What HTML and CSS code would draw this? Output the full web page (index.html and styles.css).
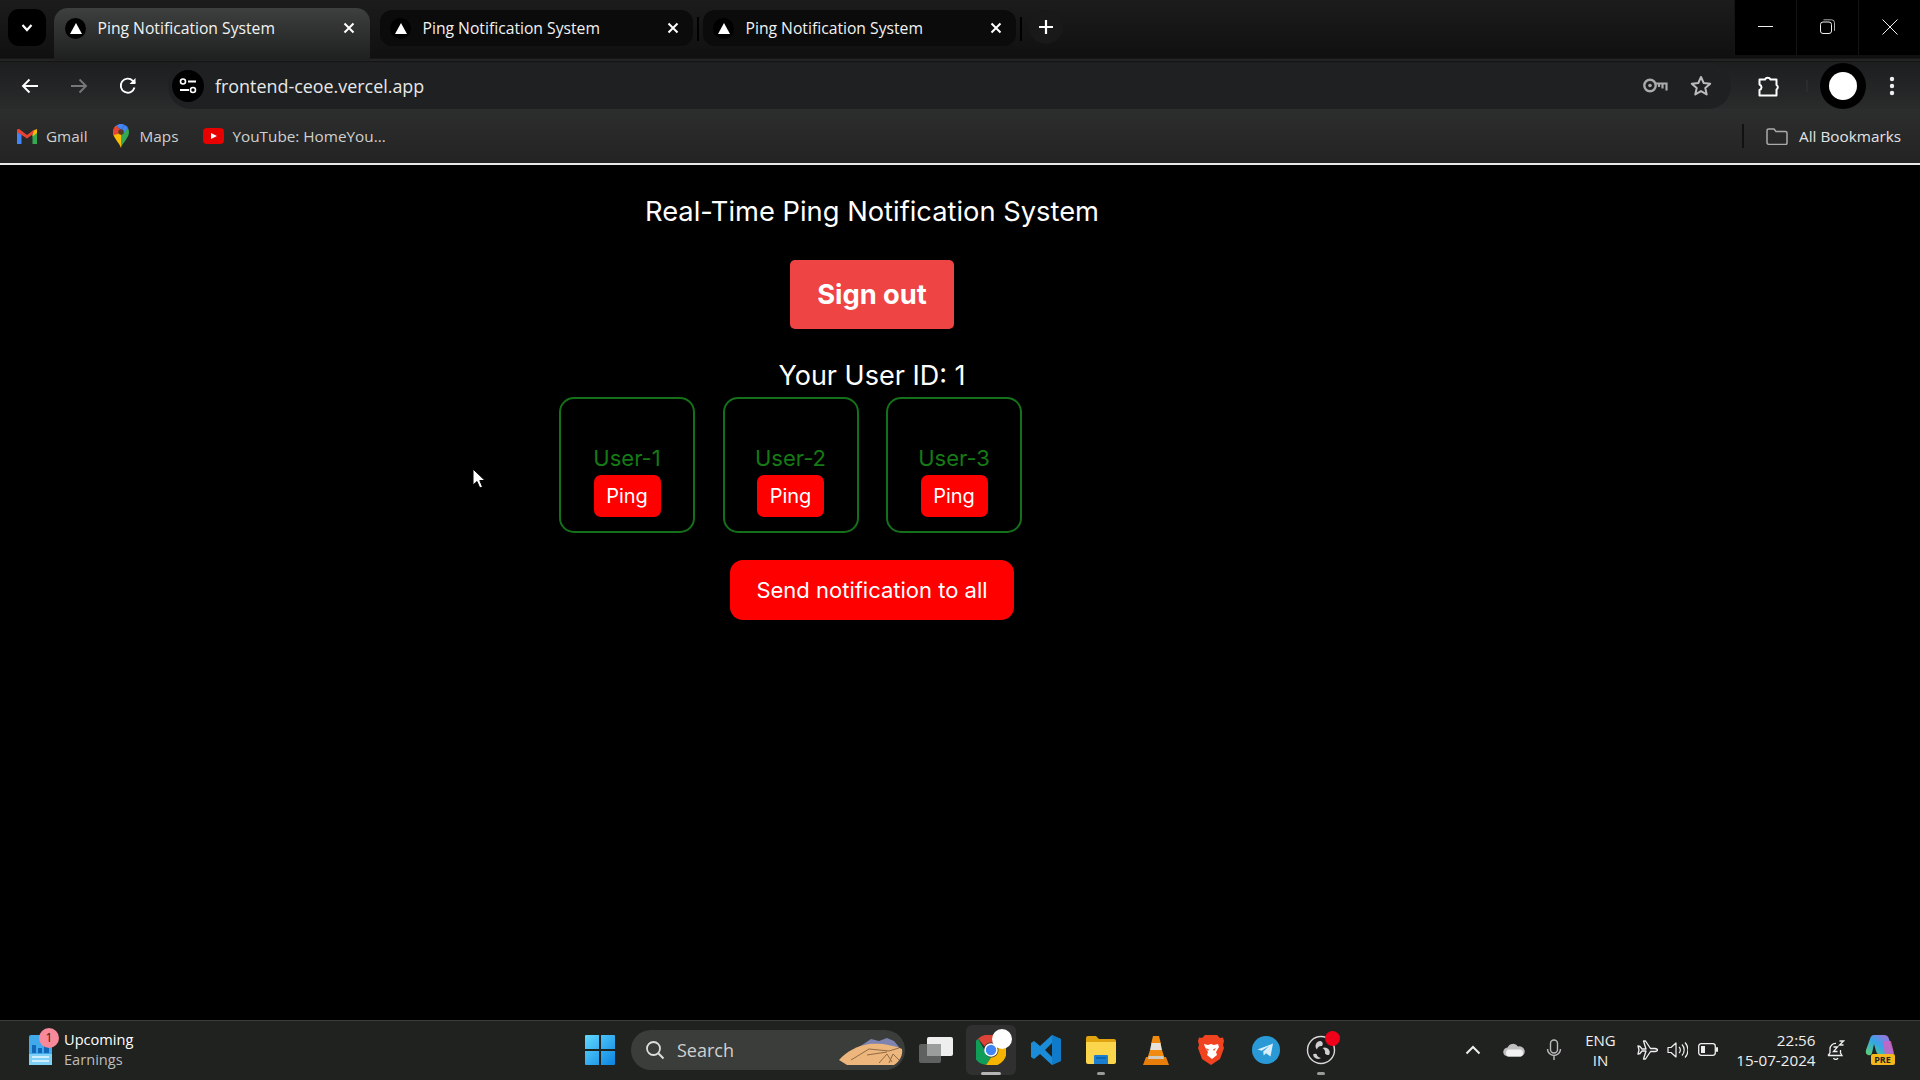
FILE: index.html
```html
<!DOCTYPE html>
<html lang="en">
<head>
  <meta charset="UTF-8" />
  <title>Ping Notification System</title>
  <link rel="stylesheet" href="styles.css">
</head>
<body>
  <header class="browser">
    <div class="tabstrip">
      <button class="tab-search">
        <svg width="14" height="10" viewBox="0 0 14 10"><path d="M2.500 2 7 7l4.500-5" fill="none" stroke="#fff" stroke-width="2.200"/></svg>
      </button>
      <div class="tab tab-active">
        <span class="favicon"><svg width="12" height="11" viewBox="0 0 12 11"><path d="M6 0l6 11H0z" fill="#fff"/></svg></span>
        <span class="tab-title">Ping Notification System</span>
        <svg class="tab-close" width="12" height="12" viewBox="0 0 12 12"><path d="M1.500 1.500l9 9m0-9l-9 9" stroke="#fff" stroke-width="2"/></svg>
      </div>
      <div class="tab">
        <span class="favicon"><svg width="12" height="11" viewBox="0 0 12 11"><path d="M6 0l6 11H0z" fill="#fff"/></svg></span>
        <span class="tab-title">Ping Notification System</span>
        <svg class="tab-close" width="12" height="12" viewBox="0 0 12 12"><path d="M1.500 1.500l9 9m0-9l-9 9" stroke="#fff" stroke-width="2"/></svg>
      </div>
      <span class="tab-sep"></span>
      <div class="tab">
        <span class="favicon"><svg width="12" height="11" viewBox="0 0 12 11"><path d="M6 0l6 11H0z" fill="#fff"/></svg></span>
        <span class="tab-title">Ping Notification System</span>
        <svg class="tab-close" width="12" height="12" viewBox="0 0 12 12"><path d="M1.500 1.500l9 9m0-9l-9 9" stroke="#fff" stroke-width="2"/></svg>
      </div>
      <span class="tab-sep"></span>
      <button class="tab-new">
        <svg width="16" height="16" viewBox="0 0 16 16"><path d="M8 1v14M1 8h14" stroke="#fff" stroke-width="2.200"/></svg>
      </button>
      <div class="window-controls">
        <span class="win-btn"><svg width="15" height="3" viewBox="0 0 15 3"><path d="M0 1.500h15" stroke="#eee" stroke-width="1"/></svg></span>
        <span class="win-btn"><svg width="15" height="15" viewBox="0 0 15 15"><rect x=".5" y="3" width="11" height="11.500" rx="2.500" fill="none" stroke="#eee"/><path d="M3.500.8h8a3 3 0 0 1 3 3v8" fill="none" stroke="#aaa"/></svg></span>
        <span class="win-btn"><svg width="16" height="16" viewBox="0 0 16 16"><path d="M.5.500l15 15m0-15l-15 15" stroke="#eee" stroke-width="1"/></svg></span>
      </div>
    </div>

    <div class="toolbar">
      <svg class="nav-icon" width="18" height="16" viewBox="0 0 18 16"><path d="M17 8H2M8.500 1.500 2 8l6.500 6.500" fill="none" stroke="#fff" stroke-width="1.900"/></svg>
      <svg class="nav-icon" width="18" height="16" viewBox="0 0 18 16"><path d="M1 8h15M9.500 1.500 16 8l-6.500 6.500" fill="none" stroke="#777" stroke-width="1.900"/></svg>
      <svg class="nav-icon" width="18" height="18" viewBox="0 0 18 18"><path d="M15.500 10.500A7 7 0 1 1 13.800 3.800L16 6" fill="none" stroke="#fff" stroke-width="1.900"/><path d="M16.500 1v6h-6z" fill="#fff"/></svg>
      <div class="omnibox">
        <span class="site-info">
          <svg width="18" height="16" viewBox="0 0 18 16"><circle cx="4" cy="3.500" r="2.500" fill="none" stroke="#fff" stroke-width="1.600"/><path d="M9 3.500h8M1 12h9" stroke="#fff" stroke-width="1.800"/><circle cx="14" cy="12" r="2.500" fill="none" stroke="#fff" stroke-width="1.600"/></svg>
        </span>
        <span class="url">frontend-ceoe.vercel.app</span>
        <svg class="omni-key" width="25" height="15" viewBox="0 0 25 15"><circle cx="7" cy="7.500" r="5.700" fill="none" stroke="#aaa" stroke-width="2.400"/><circle cx="7" cy="7.500" r="1.800" fill="#aaa"/><path d="M13 5.500h10.500v7M19.500 5.500v5M16 5.500v3.500" fill="none" stroke="#aaa" stroke-width="2.200"/></svg>
        <svg class="omni-star" width="22" height="21" viewBox="0 0 22 21"><path d="M11 2l2.700 6 6.500.7-4.900 4.300 1.400 6.400L11 16.100l-5.700 3.300 1.400-6.400L1.800 8.700 8.300 8z" fill="none" stroke="#bbb" stroke-width="2" stroke-linejoin="round"/></svg>
      </div>
      <svg class="ext-icon" width="24" height="24" viewBox="0 0 24 24"><path d="M2.500 5.500h5.500a3 3 0 0 1 5.500 0h6v5.500a2.600 2.600 0 0 1 0 4.500v6H2.500v-5.500a3.200 3.200 0 0 0 2-2.700 3.200 3.200 0 0 0-2-2.800z" fill="none" stroke="#fff" stroke-width="2" stroke-linejoin="round"/></svg>
      <span class="toolbar-sep"></span>
      <span class="avatar"><span class="avatar-dot"></span></span>
      <svg class="menu-dots" width="6" height="20" viewBox="0 0 6 20"><circle cx="3" cy="3" r="2.200" fill="#eee"/><circle cx="3" cy="10" r="2.200" fill="#eee"/><circle cx="3" cy="17" r="2.200" fill="#eee"/></svg>
    </div>

    <div class="bookmarks">
      <a class="bookmark bm-gmail">
        <svg width="20" height="15" viewBox="0 0 20 15"><path d="M0 2.500V15h4.500V5.500z" fill="#4285f4"/><path d="M20 2.500V15h-4.500V5.500z" fill="#34a853"/><path d="M15.500 2 20 0v4l-4.500 3.500z" fill="#fbbc04"/><path d="M0 1.500C0 0 1.500-.5 2.500.3L10 6 17.500.3 15.500 5.500 10 9.500 0 3z" fill="#ea4335"/></svg>
        <span>Gmail</span>
      </a>
      <a class="bookmark bm-maps">
        <svg width="16" height="24" viewBox="0 0 16 24"><path d="M8 24C6 18 0 14 0 8a8 8 0 0 1 3-6.200L8 8z" fill="#fbbc04"/><path d="M8 24c2-6 8-10 8-16 0-1.500-.4-2.800-1-4L8 11z" fill="#34a853"/><path d="M3 1.800A8 8 0 0 1 12 1L8 6z" fill="#4285f4"/><path d="M12 1a8 8 0 0 1 3 3L11 9 8 6z" fill="#4285f4"/><path d="M3 1.800 8 6 5 10 .6 11A8 8 0 0 1 3 1.800z" fill="#ea4335"/><circle cx="8" cy="8" r="2.800" fill="#5a3b20"/></svg>
        <span>Maps</span>
      </a>
      <a class="bookmark bm-yt">
        <svg width="21" height="16" viewBox="0 0 21 16"><rect width="21" height="16" rx="4" fill="#e80000"/><path d="M8 5l6 3-6 3z" fill="#fff"/></svg>
        <span>YouTube: HomeYou...</span>
      </a>
      <span class="bookmarks-sep"></span>
      <a class="bookmark bm-all">
        <svg width="22" height="17" viewBox="0 0 22 17"><path d="M1 15V2.500C1 1.500 1.500 1 2.500 1H8l2 2.500h9.500c1 0 1.500.5 1.500 1.500v10c0 1-.5 1.500-1.500 1.500h-17C1.500 16 1 15.500 1 15z" fill="none" stroke="#aaa" stroke-width="1.500"/></svg>
        <span>All Bookmarks</span>
      </a>
    </div>
  </header>

  <main class="page">
    <h1 class="title">Real-Time Ping Notification System</h1>
    <button class="btn-signout">Sign out</button>
    <p class="user-id">Your User ID: 1</p>
    <div class="users">
      <div class="user-card">
        <span class="user-name">User-1</span>
        <button class="btn-ping">Ping</button>
      </div>
      <div class="user-card">
        <span class="user-name">User-2</span>
        <button class="btn-ping">Ping</button>
      </div>
      <div class="user-card">
        <span class="user-name">User-3</span>
        <button class="btn-ping">Ping</button>
      </div>
    </div>
    <button class="btn-all">Send notification to all</button>
    <svg class="cursor" width="14" height="22" viewBox="0 0 14 22"><path d="M1 1v16l4-3.500 2.800 6.500 2.700-1.200L7.800 12.500H13z" fill="#fff" stroke="#000"/></svg>
  </main>

  <footer class="taskbar">
    <div class="widget">
      <span class="widget-icon">
        <svg width="23" height="30" viewBox="0 0 23 30"><rect width="23" height="30" rx="2" fill="#3fa9ec"/><path d="M3 18h4v-8H3zM9 18h4v-5H9zM15 18h5v-7h-5z" fill="#1166b8"/><path d="M0 19h23v11H0z" fill="#7fd0f7"/><path d="M3 22h17M3 26h17" stroke="#e6f7ff" stroke-width="1.600"/></svg>
        <span class="widget-badge">1</span>
      </span>
      <span class="widget-text">
        <span class="widget-title">Upcoming</span>
        <span class="widget-sub">Earnings</span>
      </span>
    </div>

    <div class="task-apps">
      <svg class="start" width="30" height="30" viewBox="0 0 30 30"><defs><linearGradient id="win" x1="0" y1="0" x2="1" y2="1"><stop offset="0" stop-color="#62d8ff"/><stop offset="1" stop-color="#0a84e0"/></linearGradient></defs><path d="M0 1q0-1 1-1h13v14H0zM16 0h13q1 0 1 1v13H16zM0 16h14v14H1q-1 0-1-1zM16 16h14v13q0 1-1 1H16z" fill="url(#win)"/></svg>
      <div class="searchbox">
        <svg width="20" height="20" viewBox="0 0 20 20"><circle cx="8.500" cy="8.500" r="6.500" fill="none" stroke="#ddd" stroke-width="1.800"/><path d="M13.300 13.300 18.500 18.500" stroke="#ddd" stroke-width="2"/></svg>
        <span>Search</span>
        <svg class="search-art" width="64" height="30" viewBox="0 0 64 30"><path d="M20 12 32 4l8 2 8-3 7 3 5 6v6H20z" fill="#7f83b0"/><path d="M0 25C8 16 18 11 30 9c12-1 24 1 33 5 1 6-2 12-8 16H8z" fill="#ecb67c"/><path d="M12 25l18-11 20 2 10-3M28 20l20-3M40 28l8-9 5 8M50 28l4-9 6 6" fill="none" stroke="#8f6a45" stroke-width="1"/></svg>
      </div>
      <span class="app app-taskview">
        <svg width="34" height="26" viewBox="0 0 34 26"><rect x="0" y="7" width="22" height="19" rx="2" fill="#5f6160"/><rect x="8" y="0" width="26" height="19" rx="2" fill="#eee"/><rect x="8" y="7" width="14" height="12" fill="#9b9d9c"/></svg>
      </span>
      <span class="app app-chrome">
        <svg width="30" height="30" viewBox="0 0 30 30"><path d="M15 0a15 15 0 0 1 13 7.500H15a7.500 7.500 0 0 0-6.500 3.800L2 3.800A15 15 0 0 1 15 0z" fill="#db4437"/><path d="M2 3.800l6.500 11.200a7.500 7.500 0 0 0 6.500 7.500L10 30A15 15 0 0 1 2 3.800z" fill="#0f9d58"/><path d="M28 7.500A15 15 0 0 1 10 30l5-7.500a7.500 7.500 0 0 0 6.500-11.200z" fill="#f4b400"/><circle cx="15" cy="15" r="6" fill="#4285f4" stroke="#fff" stroke-width="1.600"/></svg>
        <span class="chrome-profile"></span>
        <span class="running running-wide"></span>
      </span>
      <span class="app">
        <svg width="30" height="30" viewBox="0 0 30 30"><path d="M21 0 30 4v22l-9 4-12-11-6 5-3-2V8l3-2 6 5zM21 8l-7 7 7 7z" fill="#1b8dd8" fill-rule="evenodd"/><path d="M21 0 30 4v22l-9 4z" fill="#0a6fc0" opacity=".6"/></svg>
      </span>
      <span class="app">
        <svg width="30" height="28" viewBox="0 0 30 28"><path d="M0 2q0-2 2-2h8l3 3h15q2 0 2 2v4H0z" fill="#e0a411"/><path d="M0 6h30v20q0 2-2 2H2q-2 0-2-2z" fill="#fbd54c"/><path d="M8 20q0-1 1-1h12q1 0 1 1v8H8z" fill="#1a7fd0"/><path d="M10 22h10" stroke="#0b5ea6" stroke-width="1.500"/></svg>
        <span class="running"></span>
      </span>
      <span class="app">
        <svg width="26" height="30" viewBox="0 0 26 30"><path d="M10 1h6l2 8H8z" fill="#f08a10"/><path d="M8.500 8h9l1.500 7H7z" fill="#e8e2d8"/><path d="M7 15h12l2.500 8h-17z" fill="#f08a10"/><path d="M3 22h20l3 8H0z" fill="#e97d0a"/><path d="M5.500 21h15l.5 3H5z" fill="#cfc9bd"/></svg>
      </span>
      <span class="app">
        <svg width="26" height="30" viewBox="0 0 26 30"><path d="M7 0h12l3 3 3-.5L26 6l-1 4 1 3-4 11-9 6-9-6-4-11 1-3-1-4 1-3.500L4 3z" fill="#f1431f"/><path d="M6 9l4 1 3-1 3 1 4-1 1 3-3 5 1 3-5 4-5-4 1-3-3-5zM8 13l3 1.500-1 1.500zM18 13l-3 1.500 1 1.500z" fill="#fff" fill-rule="evenodd"/></svg>
      </span>
      <span class="app">
        <svg width="28" height="28" viewBox="0 0 28 28"><circle cx="14" cy="14" r="14" fill="#2a9ad6"/><path d="M5.500 13.500 21 7.500 18.500 20.500l-4.500-3.200-2.300 2.300-.5-4 6-5.500-7.500 4.700z" fill="#d8eefa"/></svg>
      </span>
      <span class="app">
        <svg width="30" height="30" viewBox="0 0 30 30"><circle cx="15" cy="15" r="13.500" fill="#1c1c1c" stroke="#d8d8d8" stroke-width="1.400"/><path d="M14.500 6a5 5 0 0 0-3.500 8.500C11.500 12 13.500 10.500 16 11c1.500-2 .8-4.200-1.500-5zM23 20a5 5 0 0 0-6.500-7c2 1 3 3 2.500 5.500 1.300 1.300 2.600 1.800 4 1.500zM7 19.500a5 5 0 0 0 8 3.500c-2.300-.3-4-1.800-4.500-4C9.300 18.400 8 18.600 7 19.500z" fill="#cfcfcf"/></svg>
        <span class="obs-dot"></span>
        <span class="running"></span>
      </span>
    </div>

    <div class="tray">
      <svg class="tray-chevron" width="16" height="10" viewBox="0 0 16 10"><path d="M1.500 8.500 8 2l6.500 6.500" fill="none" stroke="#eee" stroke-width="2"/></svg>
      <svg class="tray-cloud" width="22" height="15" viewBox="0 0 22 15"><path d="M5 14.500a4.500 4.500 0 0 1-.5-9A6 6 0 0 1 15 4.500a4.500 4.500 0 0 1 3 10z" fill="#bfbfbf"/><path d="M5 14.500a4 4 0 0 1 0-7h13a4 4 0 0 1 0 7z" fill="#f2f2f2"/></svg>
      <svg class="tray-mic" width="16" height="22" viewBox="0 0 16 22"><rect x="4.500" y="1" width="7" height="13" rx="3.500" fill="none" stroke="#bbb" stroke-width="1.400"/><path d="M1.500 10a6.500 6.500 0 0 0 13 0M8 16.500V21" fill="none" stroke="#bbb" stroke-width="1.400"/></svg>
      <span class="tray-lang"><span>ENG</span><span>IN</span></span>
      <svg class="tray-plane" width="21" height="20" viewBox="0 0 21 20"><path d="M1 6l2 .5 2 2.500h4L6.500 1h2l5 7.500H18q2.500.5 2.500 1.500T18 11.500h-4.500l-5 7.500h-2L9 11H5l-2 2.500-2 .5 1-4z" fill="none" stroke="#eee" stroke-width="1.300" stroke-linejoin="round"/></svg>
      <svg class="tray-volume" width="21" height="18" viewBox="0 0 21 18"><path d="M1 6.500h3L9 2v14L4 11.500H1z" fill="none" stroke="#eee" stroke-width="1.200" stroke-linejoin="round"/><path d="M12 6a4 4 0 0 1 0 6M15 3.500a8 8 0 0 1 0 11M18 1.500a11 11 0 0 1 0 15" fill="none" stroke="#eee" stroke-width="1.200"/></svg>
      <svg class="tray-battery" width="20" height="13" viewBox="0 0 20 13"><rect x=".7" y=".7" width="16.600" height="11.600" rx="2.500" fill="none" stroke="#eee" stroke-width="1.300"/><rect x="3" y="3" width="4" height="7" fill="#eee"/><rect x="18" y="4" width="2" height="5" rx="1" fill="#eee"/></svg>
      <span class="tray-clock"><span>22:56</span><span>15-07-2024</span></span>
      <svg class="tray-bell" width="18" height="20" viewBox="0 0 18 20"><path d="M3 13V9a5.500 5.500 0 0 1 6-5.500M1 15.500 3 13M1 15.500h14L13.500 13v-3M6.500 18a2.500 2.500 0 0 0 4.500 0" fill="none" stroke="#eee" stroke-width="1.300"/><path d="M6.500 7h4l-4 4.500h4M12.500 1h4l-4 4h4" fill="none" stroke="#eee" stroke-width="1.300"/></svg>
      <span class="copilot">
        <svg width="30" height="22" viewBox="0 0 30 22"><defs><linearGradient id="cop" x1="0" y1="1" x2="1" y2="0"><stop offset="0" stop-color="#5fd36a"/><stop offset=".5" stop-color="#33a5e8"/><stop offset="1" stop-color="#c560d8"/></linearGradient></defs><path d="M9 0h10q4 0 5 4l4 12q1 3-2 4H16q-4 0-5-4L9 9 7 18q-1 3-4 2Q0 19 1 15L5 4q1-4 4-4z" fill="url(#cop)"/><path d="M18 6h8l3 12q0 3-3 3h-6z" fill="#d25fc0" opacity=".8"/></svg>
        <span class="copilot-pre">PRE</span>
      </span>
    </div>
  </footer>
</body>
</html>
```

FILE: styles.css
```css
* {
  box-sizing: border-box;
}

body {
  margin: 0;
  width: 1920px;
  height: 1080px;
  overflow: hidden;
  display: flex;
  flex-direction: column;
  background-color: #000;
  font-family: "Open Sans", sans-serif;
}

button {
  border: 0;
  padding: 0;
  font-family: inherit;
}

svg {
  display: block;
  flex: none;
}

/* browser chrome */
.browser {
  flex: none;
  color: #fff;
}

.tabstrip {
  height: 62px;
  display: flex;
  align-items: flex-start;
  padding-left: 8px;
  background: linear-gradient(180deg, #1c1c1c 0, #101010 58px, #2b2b2b 60px, #0c0c0c 62px);
}

.tab-search {
  width: 38px;
  height: 37px;
  margin-top: 9px;
  margin-right: 8px;
  border-radius: 11px;
  background-color: #000;
  display: flex;
  align-items: center;
  justify-content: center;
}

.tab {
  width: 313px;
  height: 36px;
  margin-top: 10px;
  padding: 0 14px 0 10px;
  display: flex;
  align-items: center;
  border-radius: 12px;
  background-color: #0b0b0b;
}

.tab-active {
  width: 316px;
  height: 52px;
  margin-top: 8px;
  margin-right: 10px;
  padding: 0 15px 12px 11px;
  border-radius: 14px 14px 0 0;
  background: linear-gradient(180deg, #3e3f3f 0, #1e1f1f 100%);
}

.favicon {
  width: 21px;
  height: 21px;
  margin-right: 11.500px;
  border-radius: 50%;
  background-color: #000;
  display: flex;
  align-items: center;
  justify-content: center;
  flex: none;
}

.tab-title {
  font-size: 15.7px;
  color: #f2f2f2;
  white-space: nowrap;
}

.tab-close {
  margin-left: auto;
}

.tab-sep {
  width: 2px;
  height: 24px;
  margin: 17px 4px 0;
  background-color: #000;
}

.tab-new {
  width: 34px;
  height: 34px;
  margin-top: 10px;
  margin-left: 3px;
  border-radius: 50%;
  background-color: #191919;
  display: flex;
  align-items: center;
  justify-content: center;
}

.window-controls {
  display: flex;
  height: 55px;
  margin-left: auto;
  background-color: #000;
}

.win-btn {
  width: 62px;
  display: flex;
  align-items: center;
  justify-content: center;
  padding-bottom: 2px;
  border-left: 1px solid #141414;
}

.toolbar {
  height: 47px;
  display: flex;
  align-items: center;
  padding-left: 21px;
  background: linear-gradient(180deg, #1c1e1f 0, #2a2b2b 100%);
}

.nav-icon {
  margin-right: 31px;
}

.omnibox {
  width: 1563px;
  height: 46px;
  padding-left: 4px;
  display: flex;
  align-items: center;
  border-radius: 23px;
  background-color: #1e2022;
}

.site-info {
  width: 32px;
  height: 32px;
  margin-right: 11px;
  border-radius: 50%;
  background-color: #000;
  display: flex;
  align-items: center;
  justify-content: center;
}

.url {
  font-size: 17.900px;
  color: #e8e8e8;
}

.omni-key {
  margin-left: auto;
  margin-right: 22px;
}

.omni-star {
  margin-right: 19px;
}

.ext-icon {
  margin-left: 26px;
}

.toolbar-sep {
  width: 2px;
  height: 12px;
  margin-left: 25px;
  background-color: #2c2c2c;
}

.avatar {
  width: 46px;
  height: 46px;
  margin-left: 12px;
  border-radius: 50%;
  background-color: #000;
  display: flex;
  align-items: center;
  justify-content: center;
}

.avatar-dot {
  width: 28px;
  height: 28px;
  border-radius: 50%;
  background-color: #fff;
}

.menu-dots {
  margin-left: 23px;
}

.bookmarks {
  height: 56px;
  display: flex;
  align-items: center;
  padding: 0 0 0 17px;
  border-bottom: 2px solid #e8e8e8;
  background: linear-gradient(180deg, #2c2e2d 0, #232323 100%);
}

.bookmark {
  display: flex;
  align-items: center;
  font-size: 15.3px;
  color: #d0d0d0;
}

.bm-gmail svg {
  margin-right: 9px;
}

.bm-maps {
  margin-left: 25px;
}

.bm-maps svg {
  margin-right: 11px;
}

.bm-yt {
  margin-left: 25px;
}

.bm-yt svg {
  margin-right: 8px;
}

.bookmarks-sep {
  width: 2px;
  height: 24px;
  margin-left: auto;
  margin-right: 22px;
  background-color: #111;
}

.bm-all {
  padding-right: 19px;
}

.bm-all svg {
  margin-right: 11px;
}

.bm-all span {
  color: #e4e4e4;
}

/* the page in the tab */
.page {
  flex: 1;
  position: relative;
  display: flex;
  flex-direction: column;
  align-items: center;
  padding: 30px 176px 0 0;
  background-color: #000;
  color: #fff;
  font-family: Inter, sans-serif;
}

.title {
  margin: 0 0 31px;
  font-size: 27.3px;
  font-weight: 400;
  line-height: 34px;
}

.btn-signout {
  width: 164px;
  height: 69px;
  border-radius: 5px;
  background-color: #ef4444;
  color: #fff;
  font-size: 27.3px;
  font-weight: 700;
}

.user-id {
  margin: 30px 0 5px;
  font-size: 27px;
  line-height: 33px;
}

.users {
  display: flex;
  gap: 27.500px;
  margin-right: 163px;
}

.user-card {
  width: 136px;
  height: 136px;
  padding-top: 44px;
  display: flex;
  flex-direction: column;
  align-items: center;
  border: 2px solid #15701a;
  border-radius: 15px;
}

.user-name {
  font-size: 22px;
  line-height: 30px;
  margin-bottom: 2px;
  color: #157a15;
}

.btn-ping {
  width: 67px;
  height: 42px;
  border-radius: 7px;
  background-color: #f00;
  color: #fff;
  font-size: 20px;
  font-family: Inter, sans-serif;
}

.btn-all {
  width: 284px;
  height: 60px;
  margin-top: 27px;
  border-radius: 13px;
  background-color: #f00;
  color: #fff;
  font-size: 22px;
  font-weight: 400;
}

.cursor {
  position: absolute;
  left: 472px;
  top: 303px;
}

/* windows taskbar */
.taskbar {
  flex: none;
  height: 60px;
  display: flex;
  align-items: center;
  padding-bottom: 2px;
  border-top: 1px solid #3c3c3c;
  background-color: #202220;
  color: #fff;
  font-family: "Open Sans", sans-serif;
}

.widget {
  width: 585px;
  padding-left: 29px;
  display: flex;
  align-items: center;
  flex: none;
}

.widget-icon {
  position: relative;
  margin-right: 12px;
}

.widget-badge {
  position: absolute;
  left: 10px;
  top: -7px;
  width: 20px;
  height: 20px;
  border-radius: 50%;
  background-color: #f7899b;
  color: #222;
  font-size: 12px;
  line-height: 20px;
  text-align: center;
}

.widget-text {
  display: flex;
  flex-direction: column;
  margin-top: -2px;
  font-size: 14.600px;
  line-height: 20px;
}

.widget-sub {
  color: #bdbdbd;
}

.task-apps {
  display: flex;
  align-items: center;
  flex: none;
}

.start {
  margin-right: 16px;
}

.searchbox {
  width: 274px;
  height: 40px;
  padding-left: 14px;
  display: flex;
  align-items: center;
  border-radius: 20px;
  background-color: #3b3d3b;
  font-size: 18px;
  color: #d0d0d0;
  overflow: hidden;
}

.searchbox span {
  margin-left: 12px;
}

.search-art {
  margin-left: auto;
  margin-right: 2px;
}

.app {
  position: relative;
  width: 55px;
  height: 50px;
  display: flex;
  align-items: center;
  justify-content: center;
  border-radius: 6px;
}

.app-taskview {
  margin-left: 3px;
}

.app-chrome {
  width: 50px;
  margin: 0 2px 0 3px;
  background-color: #2f302f;
}

.chrome-profile {
  position: absolute;
  left: 26px;
  top: 4px;
  width: 20px;
  height: 20px;
  border-radius: 50%;
  background-color: #fff;
}

.running {
  position: absolute;
  left: 50%;
  bottom: 0;
  width: 8px;
  height: 3px;
  margin-left: -4px;
  border-radius: 2px;
  background-color: #9a9a9a;
}

.running-wide {
  width: 20px;
  margin-left: -10px;
  background-color: #b5b5b5;
}

.obs-dot {
  position: absolute;
  left: 32px;
  top: 6px;
  width: 15px;
  height: 15px;
  border-radius: 50%;
  background-color: #f00019;
}

.tray {
  flex: 1;
  display: flex;
  align-items: center;
  padding-left: 117px;
  font-size: 15px;
  color: #eee;
}

.tray-cloud {
  margin-left: 21.500px;
}

.tray-mic {
  margin-left: 21px;
}

.tray-lang {
  width: 40px;
  margin-left: 19px;
  display: flex;
  flex-direction: column;
  align-items: center;
  line-height: 20px;
}

.tray-plane {
  margin-left: 16px;
}

.tray-volume {
  margin-left: 9px;
}

.tray-battery {
  margin-left: 10px;
}

.tray-clock {
  width: 90px;
  margin-left: 8px;
  display: flex;
  flex-direction: column;
  align-items: flex-end;
  font-size: 15.2px;
  line-height: 20px;
}

.tray-bell {
  margin-left: 11px;
}

.copilot {
  position: relative;
  margin-left: 20px;
  padding-bottom: 8px;
}

.copilot-pre {
  position: absolute;
  left: 6px;
  bottom: 0;
  width: 24px;
  height: 11px;
  border-radius: 2px;
  background-color: #f4b81c;
  color: #222;
  font-size: 9px;
  font-weight: 700;
  line-height: 11px;
  text-align: center;
}
```
